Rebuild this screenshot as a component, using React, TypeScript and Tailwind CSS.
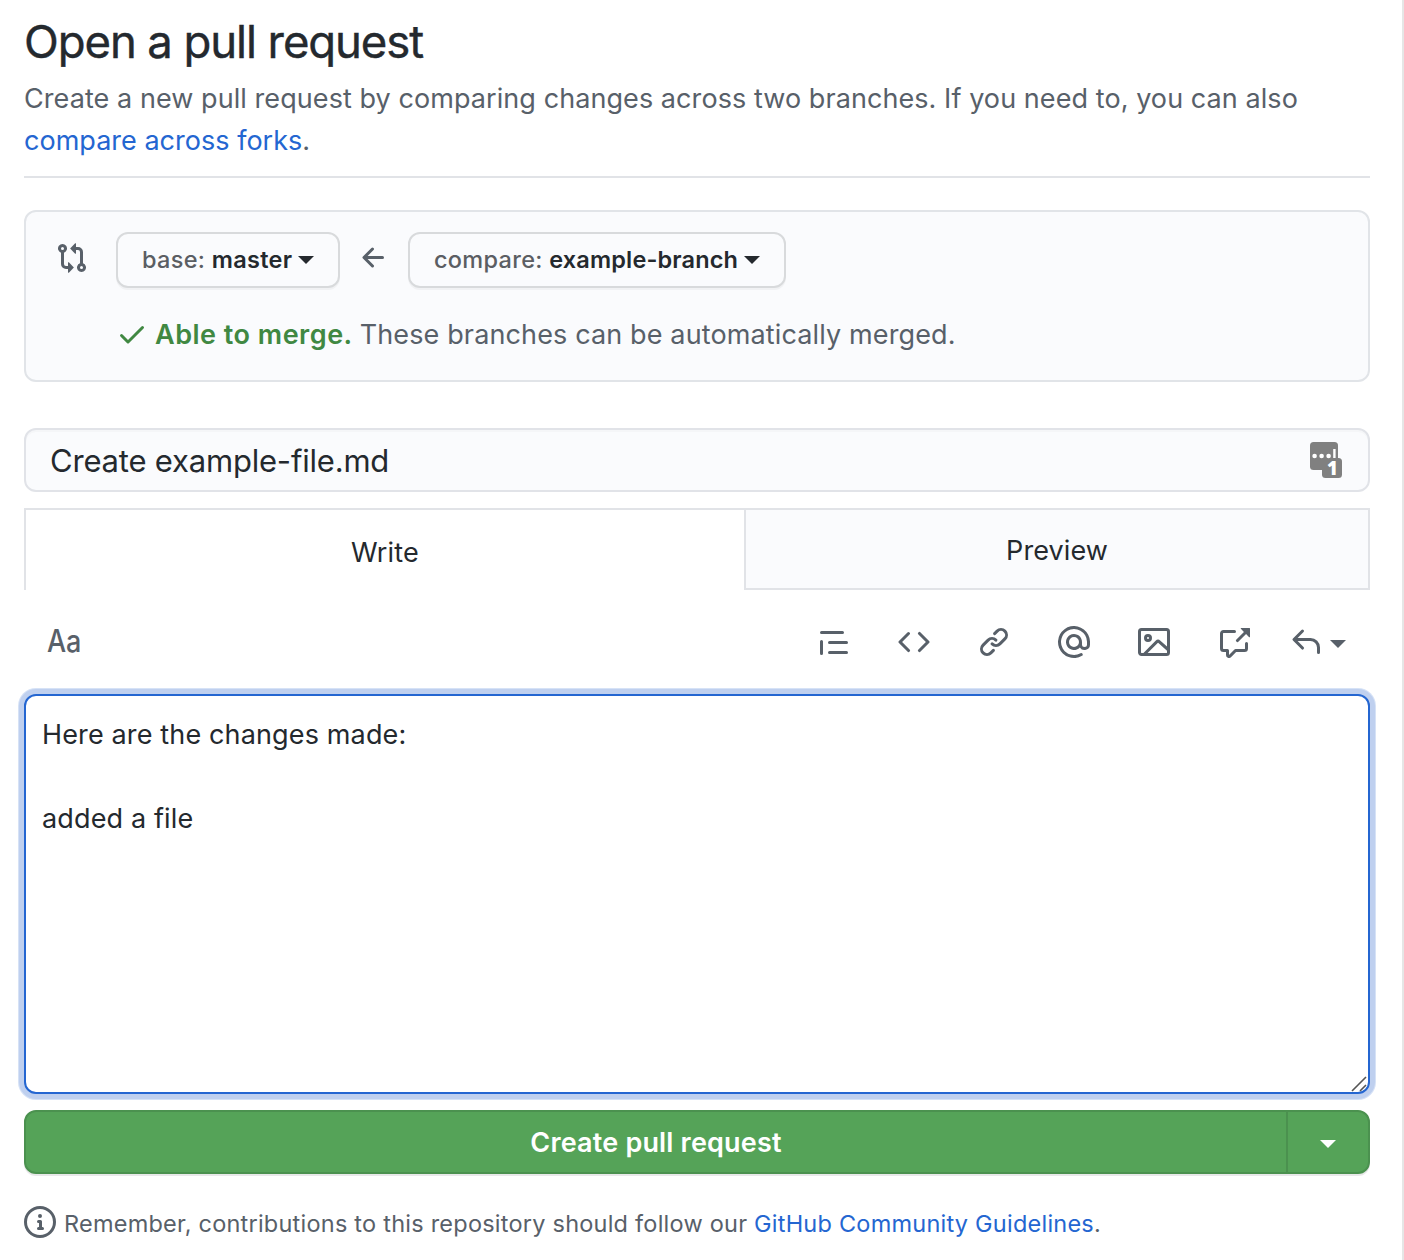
import React from "react";

const ICONS = {
  compare:
    "M9.573.677L7.177 3.073a.25.25 0 000 .354l2.396 2.396A.25.25 0 0010 5.646V4h1a1 1 0 011 1v5.628a2.251 2.251 0 101.5 0V5A2.5 2.5 0 0011 2.5h-1V.854a.25.25 0 00-.427-.177zM6 12v-1.646a.25.25 0 01.427-.177l2.396 2.396a.25.25 0 010 .354l-2.396 2.396A.25.25 0 016 15.146V13.5H5A2.5 2.5 0 012.5 11V5.372a2.25 2.25 0 111.5 0V11a1 1 0 001 1h1zM4 3.25a.75.75 0 11-1.5 0 .75.75 0 011.5 0zM12.75 12a.75.75 0 100 1.5.75.75 0 000-1.5z",
  arrowLeft:
    "M7.78 12.53a.75.75 0 01-1.06 0L2.47 8.28a.75.75 0 010-1.06l4.25-4.25a.75.75 0 011.06 1.06L4.81 7h7.44a.75.75 0 010 1.5H4.81l2.97 2.97a.75.75 0 010 1.06z",
  check:
    "M13.78 4.22a.75.75 0 010 1.06l-7.25 7.25a.75.75 0 01-1.06 0L2.22 9.28a.75.75 0 011.06-1.06L6 10.94l6.72-6.72a.75.75 0 011.06 0z",
  quote:
    "M1.75 2.5a.75.75 0 000 1.5h10.5a.75.75 0 000-1.5H1.75zm4 5a.75.75 0 000 1.5h8.5a.75.75 0 000-1.5h-8.5zm0 5a.75.75 0 000 1.5h8.5a.75.75 0 000-1.5h-8.5zM2.5 7.75a.75.75 0 00-1.5 0v6a.75.75 0 001.5 0v-6z",
  code: "M4.72 3.22a.75.75 0 011.06 1.06L2.06 8l3.72 3.72a.75.75 0 11-1.06 1.06L.47 8.53a.75.75 0 010-1.06l4.25-4.25zm6.56 0a.75.75 0 10-1.06 1.06L13.94 8l-3.72 3.72a.75.75 0 101.06 1.06l4.25-4.25a.75.75 0 000-1.06l-4.25-4.25z",
  link: "M7.775 3.275a.75.75 0 001.06 1.06l1.25-1.25a2 2 0 112.83 2.83l-2.5 2.5a2 2 0 01-2.83 0 .75.75 0 00-1.06 1.06 3.5 3.5 0 004.95 0l2.5-2.5a3.5 3.5 0 00-4.95-4.95l-1.25 1.25zm-4.69 9.64a2 2 0 010-2.83l2.5-2.5a2 2 0 012.83 0 .75.75 0 001.06-1.06 3.5 3.5 0 00-4.95 0l-2.5 2.5a3.5 3.5 0 004.95 4.95l1.25-1.25a.75.75 0 00-1.06-1.06l-1.25 1.25a2 2 0 01-2.83 0z",
  mention:
    "M4.75 2.37a6.5 6.5 0 006.5 11.26.75.75 0 01.75 1.298 8 8 0 113.994-7.273.754.754 0 01.006.095v1.5a2.75 2.75 0 01-5.072 1.475A4 4 0 1112 8v1.25a1.25 1.25 0 002.5 0V7.867a6.5 6.5 0 00-9.75-5.496zM10.5 8a2.5 2.5 0 10-5 0 2.5 2.5 0 005 0z",
  image:
    "M1.75 2.5a.25.25 0 00-.25.25v10.5c0 .138.112.25.25.25h.94a.76.76 0 01.03-.03l6.077-6.078a1.75 1.75 0 012.412-.06L14.5 10.31V2.75a.25.25 0 00-.25-.25H1.75zm12.5 11H4.81l5.048-5.047a.25.25 0 01.344-.009l4.298 3.889v.917a.25.25 0 01-.25.25zm1.75-.25V2.75A1.75 1.75 0 0014.25 1H1.75A1.75 1.75 0 000 2.75v10.5C0 14.216.784 15 1.75 15h12.5A1.75 1.75 0 0016 13.25zM5.5 6a.5.5 0 11-1 0 .5.5 0 011 0zM7 6a2 2 0 11-4 0 2 2 0 014 0z",
  crossReference:
    "M16 1.25v4.146a.25.25 0 01-.427.177L14.03 4.03l-3.75 3.75a.75.75 0 11-1.06-1.06l3.75-3.75-1.543-1.543A.25.25 0 0111.604 1h4.146a.25.25 0 01.25.25zM2.75 3.5a.25.25 0 00-.25.25v7.5c0 .138.112.25.25.25h2a.75.75 0 01.75.75v2.19l2.72-2.72a.75.75 0 01.53-.22h4.5a.25.25 0 00.25-.25v-2.5a.75.75 0 111.5 0v2.5A1.75 1.75 0 0113.25 13H9.06l-2.573 2.573A1.457 1.457 0 014 14.543V13H2.75A1.75 1.75 0 011 11.25v-7.5C1 2.784 1.784 2 2.75 2h5.5a.75.75 0 010 1.5h-5.5z",
  reply:
    "M6.78 1.97a.75.75 0 010 1.06L3.81 6h6.44A4.75 4.75 0 0115 10.75v2.5a.75.75 0 01-1.5 0v-2.5a3.25 3.25 0 00-3.25-3.25H3.81l2.97 2.97a.75.75 0 11-1.06 1.06L1.47 7.28a.75.75 0 010-1.06l4.25-4.25a.75.75 0 011.06 0z",
  info: "M8 1.5a6.5 6.5 0 100 13 6.5 6.5 0 000-13zM0 8a8 8 0 1116 0A8 8 0 010 8zm6.5-.25A.75.75 0 017.25 7h1a.75.75 0 01.75.75v2.75h.25a.75.75 0 010 1.5h-2a.75.75 0 010-1.5h.25v-2h-.25a.75.75 0 01-.75-.75zM8 6a1 1 0 100-2 1 1 0 000 2z",
};

function Icon({ name, className = "" }: { name: keyof typeof ICONS; className?: string }) {
  return (
    <svg viewBox="0 0 16 16" className={`size-8 shrink-0 fill-current ${className}`}>
      <path fillRule="evenodd" d={ICONS[name]} />
    </svg>
  );
}

function Caret({ className = "" }: { className?: string }) {
  return (
    <svg viewBox="0 0 16 8" className={`h-2 w-4 shrink-0 fill-current ${className}`}>
      <path d="M0 0h16L8 8z" />
    </svg>
  );
}

function PasswordBadge() {
  return (
    <svg viewBox="0 0 32 36" className="h-9 w-8 shrink-0 overflow-visible">
      <rect width="28" height="28" rx="3.5" fill="#808080" />
      <rect x="12" y="16" width="20" height="20" rx="3.5" fill="#808080" />
      <circle cx="4.6" cy="14" r="2.3" fill="#fff" />
      <circle cx="11.6" cy="14" r="2.3" fill="#fff" />
      <circle cx="18.6" cy="14" r="2.3" fill="#fff" />
      <path d="M23.2 7h2.4v9h-2.4z" fill="#fff" />
      <text x="22.3" y="33" textAnchor="middle" fontFamily="Open Sans" fontWeight="800" fontSize="18.5" fill="#fff">
        1
      </text>
    </svg>
  );
}

const selectButton =
  "flex h-14 shrink-0 items-center rounded-xl border-2 border-[#d8dadc] bg-[#fafbfd] text-[23.5px] leading-8 whitespace-pre shadow-[0_2px_0_rgba(27,31,35,0.04)]";

export default function App() {
  return (
    <div className="flex h-[1260px] w-[1404px] flex-col overflow-hidden border-r-2 border-[#e6e6e6] bg-white pr-8 pl-6 font-[Inter,sans-serif] text-[#24292e]">
      <header className="h-[178px] shrink-0 border-b-2 border-[#e1e3e7] pt-3">
        <h1 className="h-[66px] text-[45.5px] leading-[60px] font-normal tracking-[-1.1px] whitespace-nowrap [-webkit-text-stroke:0.4px_#24292e]">
          Open a pull request
        </h1>
        <p className="text-[27px] leading-[42px] tracking-[0.07px] whitespace-nowrap text-[#586069]">
          Create a new pull request by comparing changes across two branches. If you need to, you can also
          <br />
          <a className="tracking-[0.02px] text-[#2466d1]">compare across forks</a>.
        </p>
      </header>

      <section className="mt-8 h-[172px] shrink-0 rounded-xl border-2 border-[#e1e4e8] bg-[#fafbfd] pt-5 pl-[30px] text-[#586069]">
        <div className="flex">
          <Icon name="compare" className="mt-2.5" />
          <button className={`${selectButton} ml-7 w-56 pl-6`}>
            <span className="font-medium tracking-[0.3px] text-[#5b5e63]">base: </span>
            <span className="font-semibold tracking-[0.3px] text-[#24292e]">master</span>
            <Caret className="ml-1.5 text-[#24292e]" />
          </button>
          <Icon name="arrowLeft" className="mt-2.5 ml-[18px]" />
          <button className={`${selectButton} ml-[18px] w-[378px] pl-6`}>
            <span className="font-medium tracking-[0.3px] text-[#5b5e63]">compare: </span>
            <span className="font-semibold tracking-[0.15px] text-[#24292e]">example-branch</span>
            <Caret className="ml-1.5 text-[#24292e]" />
          </button>
        </div>
        <div className="mt-[25px] ml-[60px] flex h-[42px] items-center text-[27px] whitespace-nowrap">
          <Icon name="check" className="text-[#408842]" />
          <div className="ml-[7px] pt-0.5 leading-[42px]">
            <span className="font-semibold tracking-[0.5px] text-[#408842]">Able to merge.</span>
            <span className="ml-[7px] tracking-[0.13px]">These branches can be automatically merged.</span>
          </div>
        </div>
      </section>

      <div className="mt-[46px] flex h-16 shrink-0 items-center justify-between rounded-xl border-2 border-[#e1e3e8] bg-[#fafbfd] pr-[26px] pl-6 shadow-[inset_0_2px_0_rgba(225,228,232,0.2)]">
        <span className="pt-0.5 text-[31px] leading-10 tracking-[-0.2px] whitespace-nowrap">Create example-file.md</span>
        <PasswordBadge />
      </div>

      <div className="mt-4 flex h-[82px] shrink-0 text-[27px] leading-[42px]">
        <div className="flex w-[720px] justify-center border-t-2 border-l-2 border-[#e1e3e7] pt-[22px] tracking-[0.2px]">
          Write
        </div>
        <div className="flex flex-1 justify-center border-2 border-[#e1e3e7] bg-[#fafbfd] pt-5 tracking-[0.1px]">
          Preview
        </div>
      </div>

      <div className="flex h-[104px] shrink-0 items-center pr-6 pl-[23px] text-[#586069]">
        <span className="mb-0.5 origin-left scale-x-[0.87] text-[31px] leading-10 font-medium">Aa</span>
        <div className="ml-auto flex items-center gap-12">
          <Icon name="quote" />
          <Icon name="code" />
          <Icon name="link" />
          <Icon name="mention" />
          <Icon name="image" />
          <Icon name="crossReference" />
        </div>
        <div className="ml-10 flex items-center">
          <Icon name="reply" />
          <Caret className="mt-1 ml-2" />
        </div>
      </div>

      <div className="relative h-[400px] shrink-0 rounded-xl border-2 border-[#2466d1] bg-white px-4 pt-[18px] text-[27px] leading-[42px] tracking-[0.14px] whitespace-pre-line shadow-[0_0_0_5px_#bfd0ef,0_0_0_6px_#d6e2f6]">
        {"Here are the changes made:\n\nadded a file"}
        <svg viewBox="0 0 16 16" className="absolute right-px bottom-0 size-4">
          <path d="M1 15L15 1M9 15l6-6" stroke="#555" strokeWidth="1.6" fill="none" />
        </svg>
      </div>

      <div className="mt-4 flex h-16 shrink-0 rounded-xl border-2 border-[#4b914f] bg-[#55a358] text-white shadow-[0_2px_0_rgba(27,31,35,0.1)]">
        <button className="flex-1 border-r-2 border-[#4b914f] pt-0.5 text-[27px] leading-[42px] font-semibold tracking-[0.18px]">
          Create pull request
        </button>
        <button className="flex w-20 items-center justify-center">
          <Caret className="mt-1" />
        </button>
      </div>

      <footer className="mt-8 flex h-8 shrink-0 items-center text-[23.5px] tracking-[0.23px] whitespace-pre text-[#586069]">
        <Icon name="info" />
        <span className="ml-2 pt-[3px] leading-8">
          Remember, contributions to this repository should follow our{" "}
          <a className="text-[#2466d1]">GitHub Community Guidelines</a>.
        </span>
      </footer>
    </div>
  );
}
